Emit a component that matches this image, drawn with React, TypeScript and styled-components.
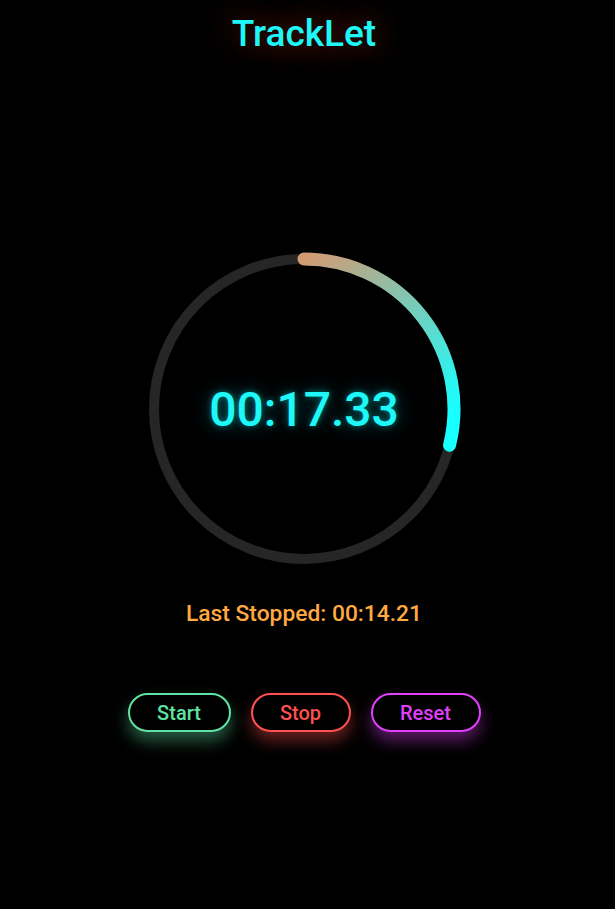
import React from "react";
import styled, { createGlobalStyle } from "styled-components";

const Global = createGlobalStyle`
  html, body { margin: 0; padding: 0; background: #000; }
  body { font-family: Roboto, "Noto Sans", sans-serif; }
`;

const Page = styled.div`
  min-height: 909px;
  background: #000;
  display: flex;
  flex-direction: column;
  align-items: center;
  padding-right: 7px;
`;

const Title = styled.h1`
  margin: 10px 0 0;
  font-size: 37px;
  line-height: 48px;
  font-weight: 500;
  color: #1ef7f7;
  text-shadow: 0 0 30px rgba(255, 100, 40, 0.45), 0 0 50px rgba(255, 100, 40, 0.3);
`;

const Ring = styled.div`
  position: relative;
  width: 320px;
  height: 320px;
  margin-top: 191px;
  display: flex;
  align-items: center;
  justify-content: center;
`;

const RingSvg = styled.svg`
  position: absolute;
  inset: 0;
`;

const Time = styled.div`
  position: relative;
  font-size: 48px;
  font-weight: 500;
  color: #1ef8f8;
  text-shadow: 0 0 6px rgba(0, 255, 255, 0.45), 0 0 20px rgba(0, 210, 230, 0.4);
`;

const Last = styled.div`
  margin-top: 31px;
  font-size: 22.8px;
  font-weight: 500;
  color: #ffa940;
`;

const Buttons = styled.div`
  display: flex;
  gap: 20px;
  margin-top: 66px;
`;

const Btn = styled.button<{ $c: string; $w: number }>`
  width: ${(p) => p.$w}px;
  height: 39px;
  box-sizing: border-box;
  border: 2px solid ${(p) => p.$c};
  border-radius: 20px;
  background: #000;
  color: ${(p) => p.$c};
  font-family: Roboto, sans-serif;
  font-size: 20px;
  font-weight: 500;
  box-shadow: 0 9px 16px ${(p) => p.$c}66;
  cursor: pointer;
`;

const R = 150;
const progress = 17.33 / 60;
const ang = progress * 2 * Math.PI;
const ex = 160 + R * Math.sin(ang);
const ey = 160 - R * Math.cos(ang);
const arc = `M 160 ${160 - R} A ${R} ${R} 0 ${progress > 0.5 ? 1 : 0} 1 ${ex.toFixed(2)} ${ey.toFixed(2)}`;

export default function App() {
  return (
    <Page>
      <Global />
      <Title>TrackLet</Title>
      <Ring>
        <RingSvg width="320" height="320" viewBox="0 0 320 320">
          <defs>
            <linearGradient id="g" gradientUnits="userSpaceOnUse" x1="160" y1="10" x2="300" y2="170">
              <stop offset="0" stopColor="#d49a74" />
              <stop offset="0.55" stopColor="#6fd0bf" />
              <stop offset="1" stopColor="#18ffff" />
            </linearGradient>
          </defs>
          <circle cx="160" cy="160" r={R} fill="none" stroke="#262626" strokeWidth="10" />
          <path d={arc} fill="none" stroke="url(#g)" strokeWidth="13" strokeLinecap="round" />
        </RingSvg>
        <Time>00:17.33</Time>
      </Ring>
      <Last>Last Stopped: 00:14.21</Last>
      <Buttons>
        <Btn $c="#5ee3a2" $w={103}>Start</Btn>
        <Btn $c="#ff5050" $w={100}>Stop</Btn>
        <Btn $c="#e040fb" $w={110}>Reset</Btn>
      </Buttons>
    </Page>
  );
}
